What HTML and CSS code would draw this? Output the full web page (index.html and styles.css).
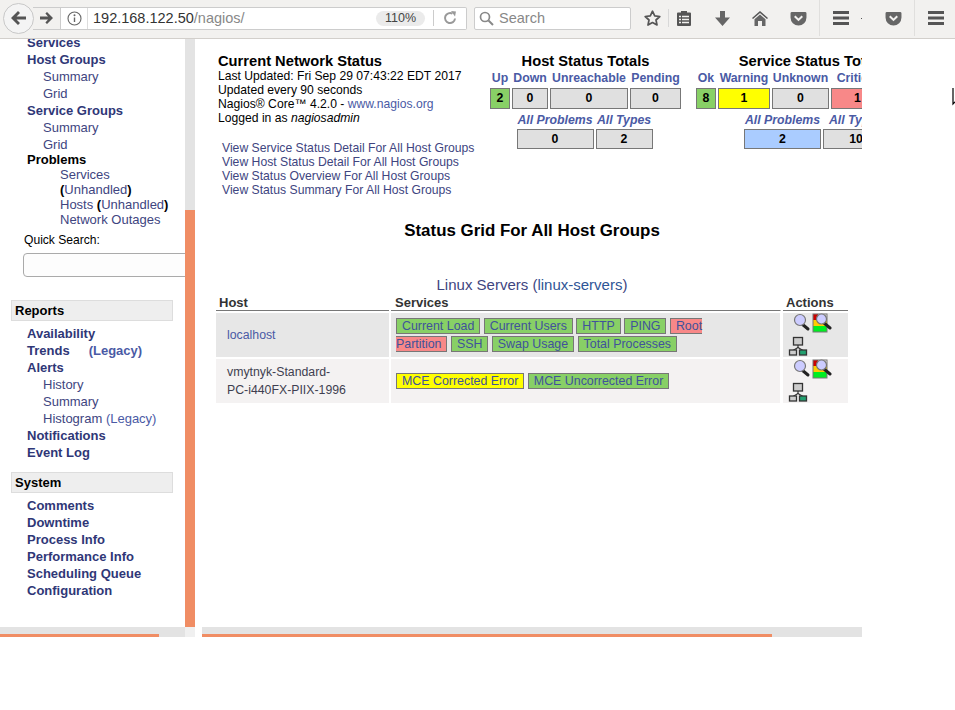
FILE: index.html
```html
<!DOCTYPE html>
<html>
<head>
  <title>Nagios Core</title>
  <link rel="stylesheet" href="styles.css">
</head>
<body>
  <svg class="defs" width="0" height="0">
    <symbol id="ic-mag" viewBox="0 0 20 20">
      <path d="M11 11l6 5" stroke="#222" stroke-width="3" stroke-linecap="round"/>
      <circle cx="9" cy="7" r="5.5" fill="#ccccff" stroke="#777" stroke-width="1.2"/>
    </symbol>
    <symbol id="ic-stat" viewBox="0 0 20 20">
      <rect x="1" y="1" width="5" height="6" fill="#cc0000"/>
      <rect x="1" y="7" width="14" height="6" fill="#ffcc00"/>
      <rect x="1" y="13" width="14" height="6" fill="#00ee22"/>
      <rect x="1" y="1" width="14" height="18" fill="none" stroke="#777" stroke-width="1"/>
      <path d="M12 10l6 5" stroke="#222" stroke-width="3" stroke-linecap="round"/>
      <circle cx="9.5" cy="6" r="5" fill="#ccccff" stroke="#777" stroke-width="1.2"/>
    </symbol>
    <symbol id="ic-tree" viewBox="0 0 20 20">
      <path d="M10 9v2.5M10 11.500l-5 3M10 11.500l5 3" stroke="#333" stroke-width="1.2" fill="none"/>
      <rect x="5.500" y="1.500" width="9" height="7.500" fill="#ccc" stroke="#333" stroke-width="1.3"/>
      <rect x="1.500" y="14" width="7" height="5" fill="#ccc" stroke="#333" stroke-width="1.3"/>
      <rect x="11.500" y="14" width="7" height="5" fill="#22a070" stroke="#333" stroke-width="1.3"/>
    </symbol>
    <symbol id="ic-pocket" viewBox="0 0 18 16">
      <path d="M2 1h14a1.500 1.500 0 0 1 1.500 1.500V7a8.500 8.500 0 0 1-17 0V2.500A1.500 1.500 0 0 1 2 1z" fill="#666"/>
      <path d="M5 5.500l4 4 4-4" fill="none" stroke="#f2f1ef" stroke-width="2.200"/>
    </symbol>
    <symbol id="ic-menu" viewBox="0 0 16 14">
      <path d="M0 0h16v3H0zM0 5.500h16v3H0zM0 11h16v3H0z" fill="#555"/>
    </symbol>
  </svg>

  <div class="toolbar">
    <div class="back">
      <svg width="15" height="14" viewBox="0 0 15 14"><path d="M7 0l2 2-3.500 3.500H15v3H5.500L9 12l-2 2-7-7z" fill="#555"/></svg>
    </div>
    <div class="urlbar">
      <div class="fwd">
        <svg width="13" height="12" viewBox="0 0 13 12"><path d="M7 0L5.400 1.600 8 4.500H0v3h8L5.400 10.400 7 12l6-6z" fill="#555"/></svg>
      </div>
      <div class="site-info">
        <svg width="15" height="15" viewBox="0 0 15 15"><circle cx="7.500" cy="7.500" r="6.500" fill="none" stroke="#666" stroke-width="1.100"/><path d="M7.500 6.500v4.500" stroke="#666" stroke-width="1.400"/><circle cx="7.500" cy="4.300" r="1" fill="#666"/></svg>
      </div>
      <div class="url">192.168.122.50<span class="url-path">/nagios/</span></div>
      <div class="zoom-badge">110%</div>
      <div class="reload">
        <svg width="14" height="14" viewBox="0 0 14 14"><path d="M12 7.500A5 5 0 1 1 9.500 2.700" fill="none" stroke="#999" stroke-width="2"/><path d="M8 0l5 .5-1 5z" fill="#999"/></svg>
      </div>
    </div>
    <div class="searchbox">
      <svg width="15" height="15" viewBox="0 0 15 15"><circle cx="6" cy="6" r="4.500" fill="none" stroke="#888" stroke-width="1.700"/><path d="M9.500 9.500l4.500 4.500" stroke="#888" stroke-width="2"/></svg>
      <span>Search</span>
    </div>
    <div class="tool t-star">
      <svg width="17" height="16" viewBox="0 0 17 16"><path d="M8.500 1.200l2.200 4.700 5.100.6-3.800 3.500 1 5-4.500-2.500L4 15l1-5L1.200 6.500l5.100-.6z" fill="none" stroke="#555" stroke-width="1.700" stroke-linejoin="round"/></svg>
    </div>
    <div class="tool t-clip">
      <svg width="14" height="16" viewBox="0 0 14 16"><path d="M1 2.500h3V1h6v1.500h3a1 1 0 0 1 1 1V15a1 1 0 0 1-1 1H1a1 1 0 0 1-1-1V3.500a1 1 0 0 1 1-1z" fill="#555"/><path d="M2 6.500h2M5 6.500h7M2 9.500h2M5 9.500h7M2 12.500h2M5 12.500h7" stroke="#f2f1ef" stroke-width="1.300"/></svg>
    </div>
    <div class="tool">
      <svg width="15" height="15" viewBox="0 0 15 15"><path d="M5 0h5v6.500h5L7.500 15 0 6.500h5z" fill="#666"/></svg>
    </div>
    <div class="tool">
      <svg width="16" height="15" viewBox="0 0 16 15"><path d="M8 0l8 7-1 1-7-6-7 6-1-1z" fill="#555"/><path d="M8 3.500l5.500 4.800V15H10v-5H6v5H2.500V8.300z" fill="#666"/></svg>
    </div>
    <div class="tool"><svg width="17" height="15"><use href="#ic-pocket"/></svg></div>
    <div class="sep"></div>
    <div class="tool t-first"><svg width="16" height="14"><use href="#ic-menu"/></svg></div>
    <div class="dot"></div>
    <div class="tool t-pocket"><svg width="17" height="15"><use href="#ic-pocket"/></svg></div>
    <div class="sep"></div>
    <div class="tool t-first"><svg width="16" height="14"><use href="#ic-menu"/></svg></div>
  </div>

  <div class="frames">
    <div class="side-frame">
      <div class="side-top">
        <div class="side">
          <ul class="nav">
            <li class="lv1"><a href="#">Services</a></li>
            <li class="lv1"><a href="#">Host Groups</a></li>
            <li class="lv2"><a href="#">Summary</a></li>
            <li class="lv2"><a href="#">Grid</a></li>
            <li class="lv1"><a href="#">Service Groups</a></li>
            <li class="lv2"><a href="#">Summary</a></li>
            <li class="lv2"><a href="#">Grid</a></li>
            <li class="lv1 problems">Problems</li>
            <li class="lv3"><a href="#">Services</a> <b>(</b><a href="#">Unhandled</a><b>)</b></li>
            <li class="lv3"><a href="#">Hosts</a> <b>(</b><a href="#">Unhandled</a><b>)</b></li>
            <li class="lv3"><a href="#">Network Outages</a></li>
          </ul>
          <div class="quick">
            <div class="quick-label">Quick Search:</div>
            <div class="quick-input"></div>
          </div>
          <div class="sect sect-reports">Reports</div>
          <ul class="nav">
            <li class="lv1"><a href="#">Availability</a></li>
            <li class="lv1"><a href="#">Trends</a><a class="legacy legacy-b" href="#">(Legacy)</a></li>
            <li class="lv1"><a href="#">Alerts</a></li>
            <li class="lv2"><a href="#">History</a></li>
            <li class="lv2"><a href="#">Summary</a></li>
            <li class="lv2"><a href="#">Histogram</a> <a class="legacy" href="#">(Legacy)</a></li>
            <li class="lv1"><a href="#">Notifications</a></li>
            <li class="lv1"><a href="#">Event Log</a></li>
          </ul>
          <div class="sect sect-system">System</div>
          <ul class="nav">
            <li class="lv1"><a href="#">Comments</a></li>
            <li class="lv1"><a href="#">Downtime</a></li>
            <li class="lv1"><a href="#">Process Info</a></li>
            <li class="lv1"><a href="#">Performance Info</a></li>
            <li class="lv1"><a href="#">Scheduling Queue</a></li>
            <li class="lv1"><a href="#">Configuration</a></li>
          </ul>
        </div>
        <div class="vbar"><div class="vthumb"></div></div>
      </div>
      <div class="side-bottom">
        <div class="hbar hbar-side"><div class="hthumb"></div></div>
        <div class="corner"></div>
      </div>
    </div>

    <div class="main-frame">
      <div class="main">
        <div class="top">
          <div class="info">
            <div class="title">Current Network Status</div>
            <div class="info-lines">
              Last Updated: Fri Sep 29 07:43:22 EDT 2017<br>
              Updated every 90 seconds<br>
              Nagios&reg; Core&trade; 4.2.0 - <a class="ext" href="#">www.nagios.org</a><br>
              Logged in as <i>nagiosadmin</i>
            </div>
            <div class="views">
              <a href="#">View Service Status Detail For All Host Groups</a><br>
              <a href="#">View Host Status Detail For All Host Groups</a><br>
              <a href="#">View Status Overview For All Host Groups</a><br>
              <a href="#">View Status Summary For All Host Groups</a>
            </div>
          </div>

          <div class="totals host-totals">
            <div class="title">Host Status Totals</div>
            <div class="t-row t-head">
              <a href="#">Up</a><a href="#">Down</a><a href="#">Unreachable</a><a href="#">Pending</a>
            </div>
            <div class="t-row t-cells">
              <div class="cell ok">2</div><div class="cell">0</div><div class="cell">0</div><div class="cell">0</div>
            </div>
            <div class="t-row2 t-head2">
              <a href="#">All Problems</a><a href="#">All Types</a>
            </div>
            <div class="t-row2 t-cells2">
              <div class="cell">0</div><div class="cell">2</div>
            </div>
          </div>

          <div class="totals svc-totals">
            <div class="title">Service Status Totals</div>
            <div class="t-row t-head">
              <a href="#">Ok</a><a href="#">Warning</a><a href="#">Unknown</a><a href="#">Critical</a><a href="#">Pending</a>
            </div>
            <div class="t-row t-cells">
              <div class="cell ok">8</div><div class="cell warn">1</div><div class="cell">0</div><div class="cell crit">1</div><div class="cell">0</div>
            </div>
            <div class="t-row2 t-head2">
              <a href="#">All Problems</a><a href="#">All Types</a>
            </div>
            <div class="t-row2 t-cells2">
              <div class="cell prob">2</div><div class="cell">10</div>
            </div>
          </div>
        </div>

        <h1 class="grid-title">Status Grid For All Host Groups</h1>
        <div class="group-name"><a href="#">Linux Servers</a> (<a class="group-link" href="#">linux-servers</a>)</div>

        <div class="grid">
          <div class="gh">Host</div>
          <div class="gh gh-svc">Services</div>
          <div class="gh">Actions</div>

          <div class="gc host odd"><a class="ext" href="#">localhost</a></div>
          <div class="gc svc odd">
            <div class="chips">
              <a class="chip" href="#">Current Load</a>
              <a class="chip" href="#">Current Users</a>
              <a class="chip" href="#">HTTP</a>
              <a class="chip" href="#">PING</a>
              <a class="chip red" href="#">Root Partition</a>
              <a class="chip" href="#">SSH</a>
              <a class="chip" href="#">Swap Usage</a>
              <a class="chip" href="#">Total Processes</a>
            </div>
          </div>
          <div class="gc act odd">
            <svg class="i-mag"><use href="#ic-mag"/></svg><svg class="i-stat"><use href="#ic-stat"/></svg><svg class="i-tree"><use href="#ic-tree"/></svg>
          </div>

          <div class="gc host even">vmytnyk-Standard-<br>PC-i440FX-PIIX-1996</div>
          <div class="gc svc even">
            <div class="chips">
              <a class="chip yellow" href="#">MCE Corrected Error</a>
              <a class="chip" href="#">MCE Uncorrected Error</a>
            </div>
          </div>
          <div class="gc act even">
            <svg class="i-mag"><use href="#ic-mag"/></svg><svg class="i-stat"><use href="#ic-stat"/></svg><svg class="i-tree"><use href="#ic-tree"/></svg>
          </div>
        </div>
      </div>
      <div class="hbar hbar-main"><div class="hthumb"></div></div>
    </div>
  </div>

  <svg class="cursor" width="6" height="20" viewBox="0 0 6 20"><path d="M1 1v16l3-3 2 4" fill="#fff" stroke="#000" stroke-width="1.200"/></svg>
</body>
</html>
```

FILE: styles.css
```css
body {
  margin: 0;
  height: 710px;
  overflow: hidden;
  position: relative;
  background: #fff;
  font-family: "Liberation Sans", Arial, sans-serif;
  font-size: 12.3px;
  color: #000;
}

a {
  color: #40457f;
  text-decoration: none;
}

.defs {
  display: block;
  height: 0;
}

.cursor {
  position: absolute;
  left: 952px;
  top: 87px;
}

/* browser toolbar */
.toolbar {
  height: 36px;
  padding: 0 0 2px 3px;
  background: #f2f1ef;
  border-bottom: 1px solid #d2cfcb;
  display: flex;
  align-items: center;
  overflow: hidden;
}

.back {
  width: 29px;
  height: 29px;
  border: 1px solid #c8c8c8;
  border-radius: 50%;
  background: #f4f4f4;
  display: flex;
  align-items: center;
  justify-content: center;
  position: relative;
  z-index: 1;
  flex: none;
}

.urlbar {
  width: 433px;
  height: 21px;
  margin-left: -1px;
  background: #fff;
  border: 1px solid #ccc;
  border-left: 0;
  border-radius: 0 2px 2px 0;
  display: flex;
  align-items: center;
  flex: none;
}

.fwd {
  width: 27px;
  height: 21px;
  background: #f2f1ef;
  border-right: 1px solid #ccc;
  display: flex;
  align-items: center;
  justify-content: center;
  flex: none;
}

.site-info {
  width: 26px;
  height: 21px;
  display: flex;
  align-items: center;
  justify-content: center;
  flex: none;
}

.url {
  padding-left: 5px;
  border-left: 1px solid #ddd;
  line-height: 21px;
  height: 21px;
  font-size: 14.5px;
  color: #333;
  flex: 1;
  white-space: nowrap;
}

.url-path {
  color: #888;
}

.zoom-badge {
  width: 49px;
  height: 15px;
  line-height: 15px;
  background: #ebebeb;
  border-radius: 8px;
  text-align: center;
  font-size: 12.5px;
  color: #444;
  flex: none;
}

.reload {
  width: 32px;
  margin-left: 8px;
  height: 16px;
  border-left: 1px solid #ccc;
  display: flex;
  align-items: center;
  justify-content: center;
  flex: none;
}

.searchbox {
  width: 151px;
  height: 21px;
  margin-left: 7px;
  background: #fff;
  border: 1px solid #ccc;
  border-radius: 2px;
  display: flex;
  align-items: center;
  gap: 5px;
  padding-left: 4px;
  font-size: 14.5px;
  color: #888;
  flex: none;
}

.tool {
  width: 38px;
  height: 18px;
  flex: none;
  display: flex;
  align-items: center;
  justify-content: center;
}

.t-star {
  width: 31px;
  margin-left: 6px;
  border-right: 1px solid #d8d8d8;
}

.t-clip {
  width: 30px;
  margin-right: 4px;
}

.sep {
  width: 1px;
  height: 36px;
  margin-left: 2px;
  background: #e0dfdd;
  flex: none;
}

.t-first {
  margin-left: 2px;
}

.t-pocket {
  margin-left: 11px;
}

.dot {
  width: 1px;
  height: 1px;
  margin: 0 1px 0 1px;
  background: #555;
  flex: none;
}

/* frames */
.frames {
  display: flex;
  height: 598px;
}

.side-frame {
  width: 195px;
  flex: none;
}

.side-top {
  display: flex;
  height: 588px;
}

.side {
  width: 185px;
  overflow: hidden;
  flex: none;
  font-size: 13px;
}

.vbar {
  width: 10px;
  background: #e3e3e3;
}

.vthumb {
  margin-top: 171px;
  height: 417px;
  background: #f08d64;
}

.side-bottom {
  display: flex;
  height: 10px;
}

.hbar {
  height: 10px;
  background: #e3e3e3;
  display: flex;
  align-items: flex-end;
}

.hbar-side {
  width: 185px;
}

.hbar-side .hthumb {
  width: 159px;
}

.hbar-main .hthumb {
  width: 570px;
}

.hthumb {
  height: 3px;
  background: #f08d64;
}

.corner {
  width: 10px;
  background: #f0f0f0;
}

/* side menu */
.nav {
  list-style: none;
  margin: 0;
  padding: 0;
  line-height: 17px;
}

.side > .nav:first-child {
  margin-top: -5px;
}

.lv1 {
  padding-left: 27px;
  font-weight: bold;
}

.lv1 a {
  color: #2f3777;
}

.lv2 {
  padding-left: 43px;
}

.lv3 {
  padding-left: 60px;
  line-height: 15px;
}

.problems {
  line-height: 14px;
  padding-left: 27px;
}

.legacy,
.lv1 a.legacy {
  color: #4a5aa5;
}

.legacy-b {
  margin-left: 19px;
}

.quick {
  margin-left: 23px;
  padding-top: 6px;
}

.quick-label {
  padding-left: 1px;
  line-height: 15px;
  font-size: 12.1px;
}

.quick-input {
  margin-top: 5px;
  width: 180px;
  height: 22px;
  border: 1px solid #aaa;
  border-radius: 4px;
  background: #fdfdfd;
}

.sect {
  margin-left: 11px;
  width: 157px;
  height: 19px;
  line-height: 19px;
  padding-left: 3px;
  background: #eee;
  border: 1px solid #ddd;
  font-weight: bold;
}

.sect-reports {
  margin-top: 23px;
  margin-bottom: 4px;
}

.sect-system {
  margin-top: 11px;
  margin-bottom: 4px;
}

/* main frame */
.main-frame {
  width: 660px;
  margin-left: 7px;
  flex: none;
  display: flex;
  flex-direction: column;
}

.main {
  height: 588px;
  overflow: hidden;
}

.top {
  display: flex;
  padding: 14px 0 0 16px;
  width: 760px;
}

.title {
  font-size: 14.7px;
  font-weight: bold;
  line-height: 16px;
}

.info {
  width: 272px;
  flex: none;
}

.info-lines {
  font-size: 12.15px;
  line-height: 14px;
  white-space: nowrap;
}

.ext {
  color: #4a5aa5;
}

.views {
  margin-top: 16px;
  padding-left: 4px;
  font-size: 12.2px;
  line-height: 14px;
  white-space: nowrap;
}

.totals {
  flex: none;
}

.totals .title {
  text-align: center;
  margin-bottom: 2px;
}

.host-totals {
  width: 191px;
}

.svc-totals {
  width: 243px;
  margin-left: 15px;
}

.svc-totals .title {
  padding-right: 10px;
}

.t-row {
  display: grid;
  gap: 2px;
}

.host-totals .t-row {
  grid-template-columns: 20px 36px 78px 51px;
}

.svc-totals .t-row {
  grid-template-columns: 20px 52px 57px 53px 51px;
}

.t-row2 {
  display: grid;
  gap: 2px;
  justify-content: center;
  padding-right: 2px;
}

.host-totals .t-row2 {
  grid-template-columns: 77px 57px;
}

.svc-totals .t-row2 {
  grid-template-columns: 77px 66px;
}

.t-head,
.t-head2 {
  line-height: 14px;
  font-weight: bold;
  text-align: center;
  margin-bottom: 3px;
  white-space: nowrap;
}

.t-head a,
.t-head2 a {
  color: #4a5aa5;
}

.t-head2 {
  font-style: italic;
  margin-bottom: 2px;
}

.t-cells {
  margin-bottom: 4px;
}

.cell {
  height: 19px;
  line-height: 19px;
  border: 1px solid #777;
  background: #e0e0e0;
  text-align: center;
  font-weight: bold;
}

.t-cells2 .cell {
  height: 18px;
  line-height: 18px;
}

.ok {
  background: #88d066;
}

.warn {
  background: #ffff00;
}

.crit {
  background: #f88888;
}

.prob {
  background: #aaccff;
}

.grid-title {
  margin: 24px 0 0;
  font-size: 16.9px;
  line-height: 20px;
  font-weight: bold;
  text-align: center;
}

.group-name {
  margin-top: 35px;
  font-size: 15px;
  line-height: 18px;
  text-align: center;
  color: #40457f;
}

.group-link {
  color: #2f5596;
}

.grid {
  margin: 1px 0 0 14px;
  display: grid;
  grid-template-columns: 173px 390px 65px;
  grid-auto-rows: auto;
  gap: 2px;
}

.gh {
  font-weight: bold;
  font-size: 13px;
  line-height: 14px;
  padding: 1px 0 0 3px;
  border-bottom: 1px solid #777;
  color: #333;
}

.gh-svc {
  padding-left: 4px;
  border-right: 1px solid #fff;
}

.gc {
  height: 44px;
}

.odd {
  background: #e7e7e7;
}

.even {
  background: #f4f2f2;
}

.host {
  padding-left: 11px;
  display: flex;
  align-items: center;
  line-height: 18px;
  color: #3f3f50;
}

.svc {
  border-right: 1px solid #fff;
  padding-left: 5px;
  display: flex;
  align-items: center;
}

.chips {
  width: 330px;
  line-height: 18px;
  font-size: 12.4px;
}

.chip {
  border: 1px solid #777;
  padding: 0 5px;
  background: #88d066;
  color: #40529b;
}

.chip.red {
  background: #f88888;
}

.chip.yellow {
  background: #ffff00;
}

.act {
  display: flex;
  flex-wrap: wrap;
  align-content: flex-start;
  row-gap: 3px;
  padding-left: 8px;
  box-sizing: border-box;
}

.act svg {
  width: 20px;
  height: 20px;
}

.act .i-stat {
  margin-left: 1px;
}

.act .i-tree {
  margin-left: -3px;
  margin-right: 30px;
}
```
